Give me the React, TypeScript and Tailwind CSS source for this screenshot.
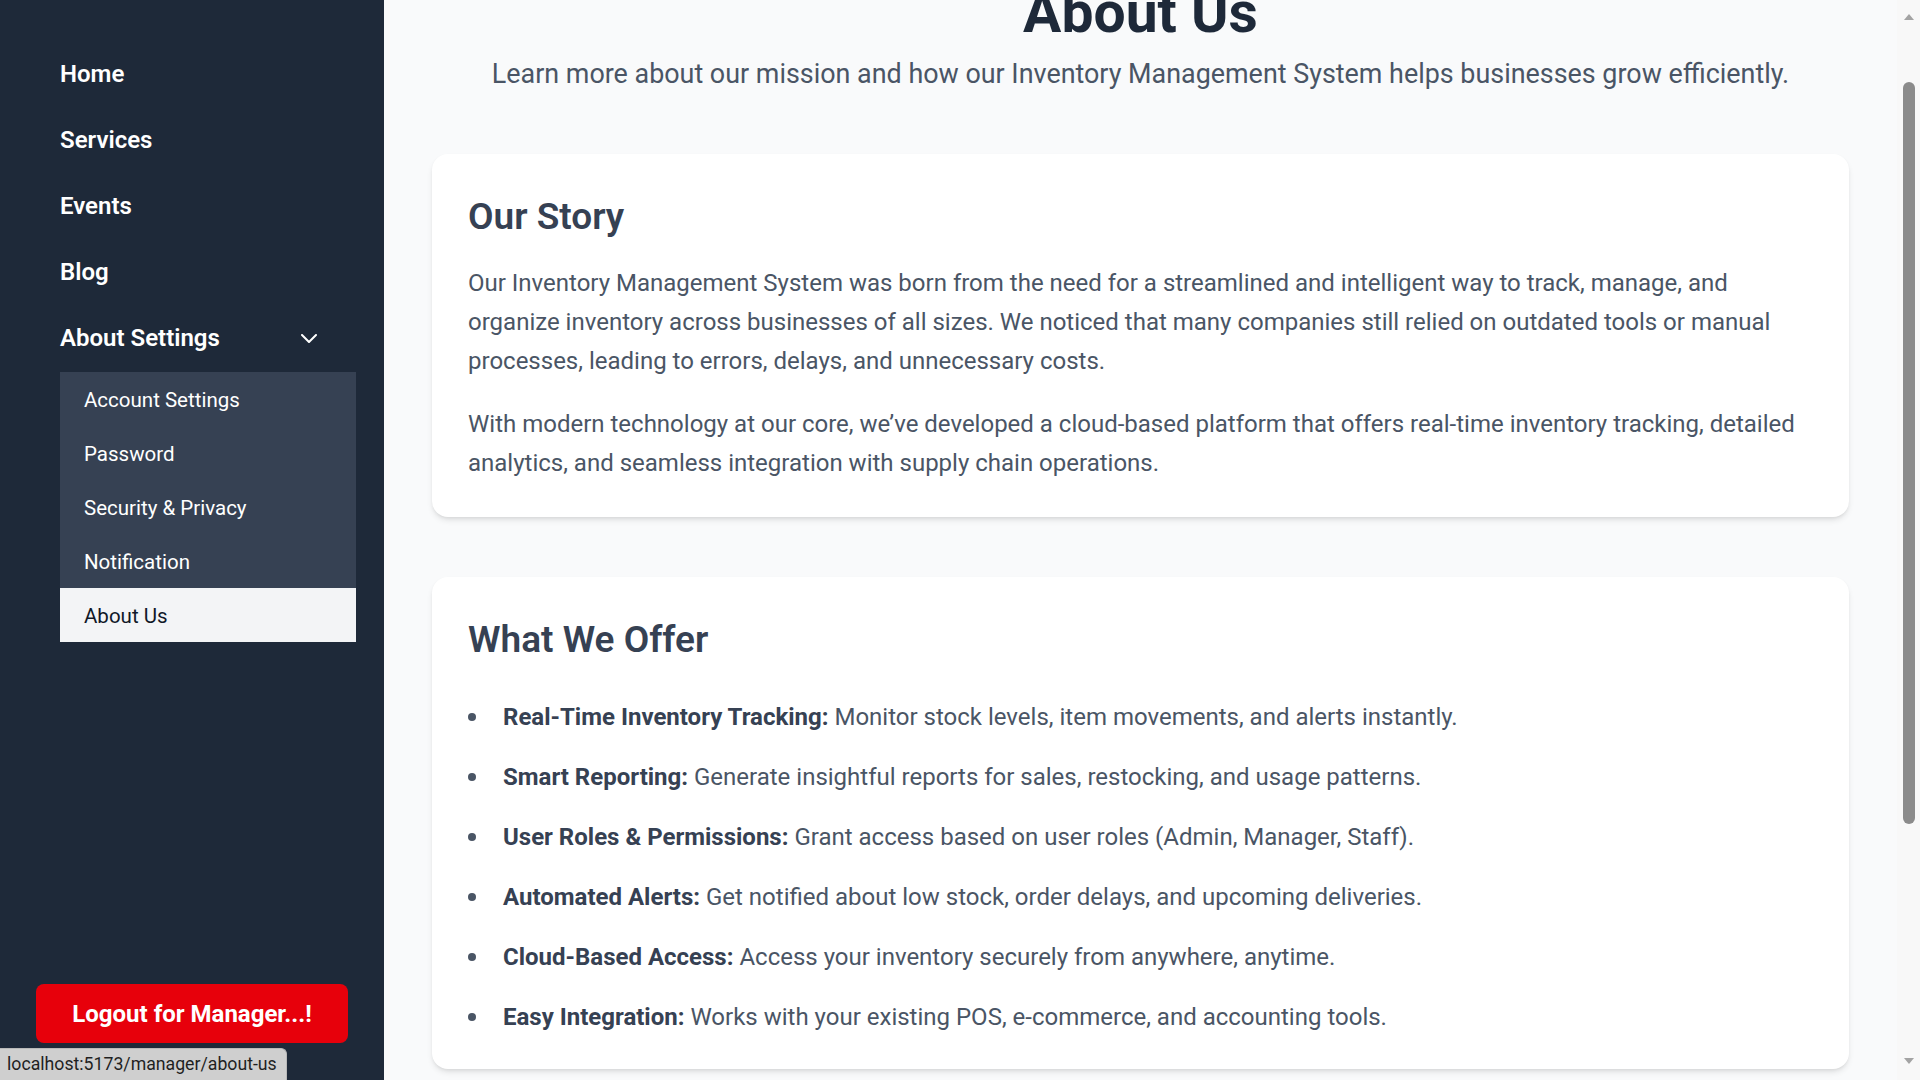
const FONT = { fontFamily: 'Roboto, "Noto Sans", Arial, sans-serif' };

const navItems = ["Home", "Services", "Events", "Blog"];
const subItems = ["Account Settings", "Password", "Security & Privacy", "Notification", "About Us"];

const offers = [
  ["Real-Time Inventory Tracking:", "Monitor stock levels, item movements, and alerts instantly."],
  ["Smart Reporting:", "Generate insightful reports for sales, restocking, and usage patterns."],
  ["User Roles & Permissions:", "Grant access based on user roles (Admin, Manager, Staff)."],
  ["Automated Alerts:", "Get notified about low stock, order delays, and upcoming deliveries."],
  ["Cloud-Based Access:", "Access your inventory securely from anywhere, anytime."],
  ["Easy Integration:", "Works with your existing POS, e-commerce, and accounting tools."],
];

export default function App() {
  return (
    <div className="relative flex h-screen w-full overflow-hidden bg-gray-50" style={FONT}>
      <aside className="flex w-96 shrink-0 flex-col bg-gray-800">
        <nav className="flex flex-col gap-0.5 pl-[60px] pr-[28px] pt-[42px]">
          {navItems.map((n) => (
            <a key={n} className="py-4 text-2xl font-semibold text-white">
              {n}
            </a>
          ))}
          <div className="flex items-center justify-between py-4 pr-[39px] text-2xl font-semibold text-white">
            <span>About Settings</span>
            <svg width="16" height="9" viewBox="0 0 16 9" fill="none" stroke="white" strokeWidth="2" strokeLinecap="round" strokeLinejoin="round">
              <path d="M1 1l7 7 7-7" />
            </svg>
          </div>
          <ul className="bg-gray-700">
            {subItems.map((s) => (
              <li
                key={s}
                className={
                  s === "About Us"
                    ? "flex h-[54px] items-center bg-gray-100 px-6 pt-[3px] text-[20.5px] text-gray-900"
                    : "flex h-[54px] items-center px-6 pt-[3px] text-[20.5px] text-white"
                }
              >
                {s}
              </li>
            ))}
          </ul>
        </nav>
        <div className="mt-auto px-9 pb-[37px]">
          <button className="h-[59px] w-full rounded-lg bg-red-600 text-2xl font-bold text-white">
            Logout for Manager...!
          </button>
        </div>
      </aside>

      <main className="min-w-0 flex-1 overflow-hidden">
        <div className="-mt-4 px-12">
          <h1 className="text-center text-[57px] leading-none font-bold text-gray-800">About Us</h1>
          <p className="mt-[17px] text-center text-[26.9px] leading-8 text-gray-600">
            Learn more about our mission and how our Inventory Management System helps businesses grow efficiently.
          </p>

          <div className="mt-16 flex flex-col gap-[60px]">
            <section className="rounded-2xl bg-white px-9 pb-[34px] pt-9 shadow-md">
              <h2 className="mb-[21px] text-[37px] leading-[53px] font-semibold text-gray-700">Our Story</h2>
              <p className="text-2xl leading-[39px] text-gray-600">
                Our Inventory Management System was born from the need for a streamlined and intelligent way to track, manage, and
                organize inventory across businesses of all sizes. We noticed that many companies still relied on outdated tools or
                manual processes, leading to errors, delays, and unnecessary costs.
              </p>
              <p className="mt-6 text-2xl leading-[39px] text-gray-600">
                With modern technology at our core, we’ve developed a cloud-based platform that offers real-time inventory tracking,
                detailed analytics, and seamless integration with supply chain operations.
              </p>
            </section>

            <section className="rounded-2xl bg-white p-9 shadow-md">
              <h2 className="text-[37px] leading-[53px] font-semibold text-gray-700">What We Offer</h2>
              <ul className="mt-[35px] flex flex-col gap-7">
                {offers.map(([b, t]) => (
                  <li key={b} className="flex items-center text-2xl leading-8 text-gray-600">
                    <span className="mr-[27px] h-2 w-2 shrink-0 rounded-full bg-gray-600" />
                    <span>
                      <strong className="font-bold text-gray-700">{b}</strong> {t}
                    </span>
                  </li>
                ))}
              </ul>
            </section>
          </div>
        </div>
      </main>

      <div className="flex w-[23px] shrink-0 flex-col items-center bg-[#f8f8f8] pb-[16px] pt-[14px]">
        <div className="h-0 w-0 border-x-[5px] border-b-[6px] border-x-transparent border-b-[#a3a3a3]" />
        <div className="mt-[62px] h-[742px] w-3 rounded-full bg-[#8b8b8b]" />
        <div className="mt-auto h-0 w-0 border-x-[5px] border-t-[6px] border-x-transparent border-t-[#a3a3a3]" />
      </div>

      <div className="absolute bottom-0 left-0 flex h-8 w-[287px] items-center rounded-tr-md border-r border-t border-[#b9b9b9] bg-[#cfcfcf] pl-[7px] text-[17.7px] text-[#1f1f1f]">
        localhost:5173/manager/about-us
      </div>
    </div>
  );
}
